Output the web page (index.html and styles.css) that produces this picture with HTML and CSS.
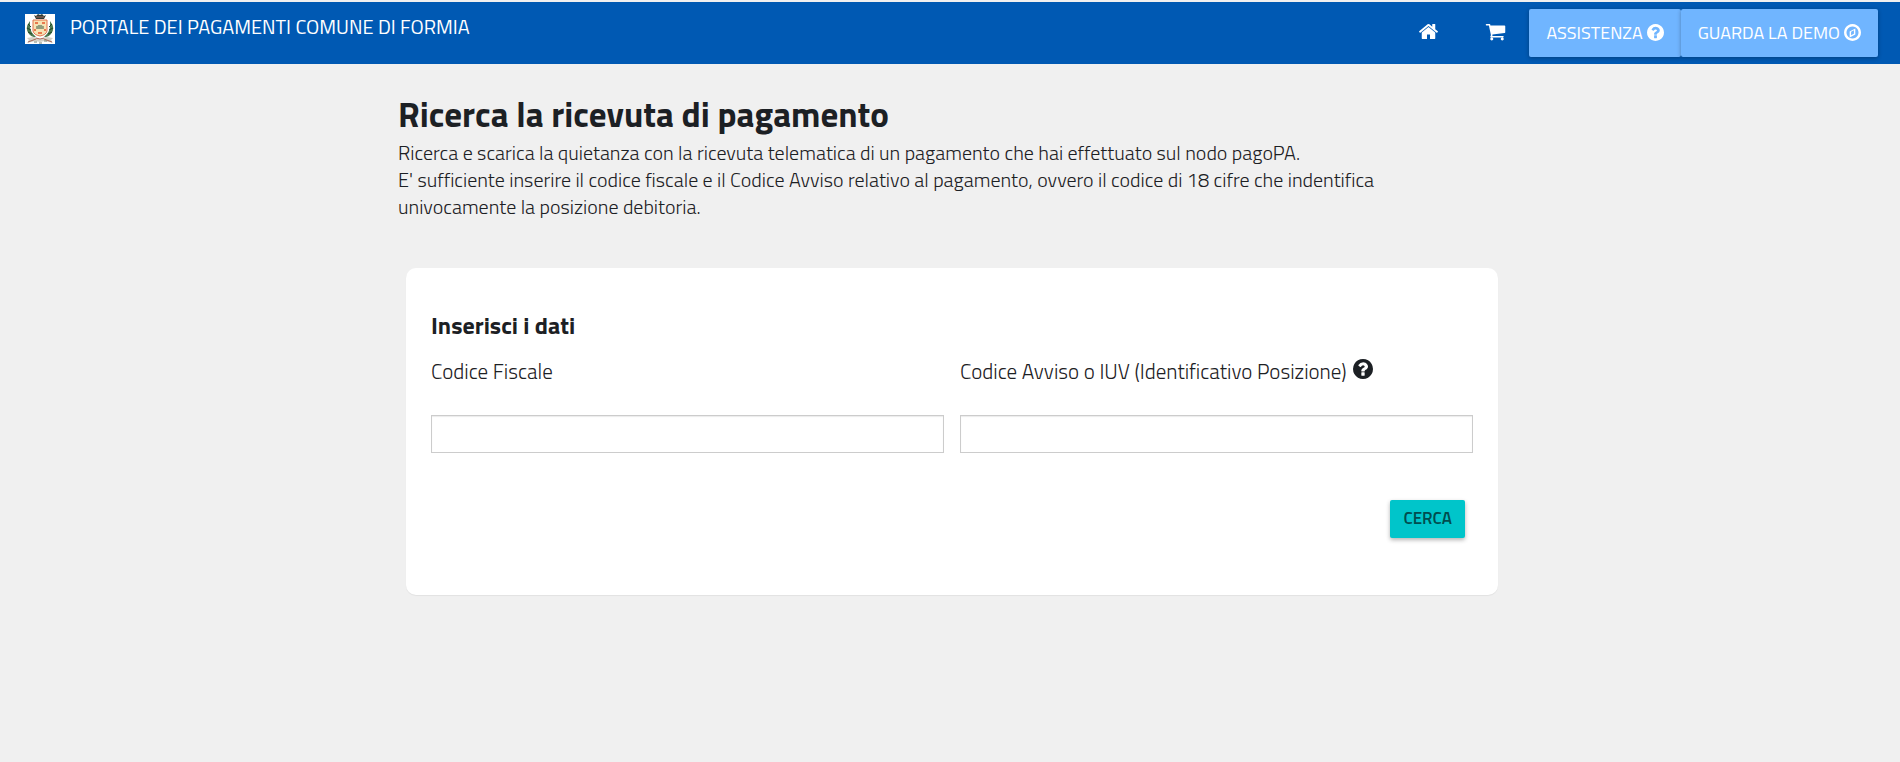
FILE: index.html
```html
<!DOCTYPE html>
<html lang="it">
<head>
    <meta charset="UTF-8">
    <meta name="viewport" content="width=device-width, initial-scale=1.0">
    <title>Portale dei pagamenti Comune di Formia</title>
    <link rel="stylesheet" href="styles.css">
</head>
<body>

<header class="topbar">
    <a class="brand" href="#">
        <svg class="crest" viewBox="0 0 30 30" aria-hidden="true">
            <rect width="30" height="30" fill="#fff"/>
            <!-- laurel branches -->
            <path d="M5 7Q-1 14 4 20Q7 24 11 23Q5 18 5 12Z" fill="#4d7a50"/>
            <path d="M25 7Q31 14 26 20Q23 24 19 23Q25 18 25 12Z" fill="#4d7a50"/>
            <path d="M3 10l3 3M2 14l4 2M3 18l4 2M27 10l-3 3M28 14l-4 2M27 18l-4 2" stroke="#1f4527"/>
            <!-- crown -->
            <path d="M9 1l2 1 2-2 2 1 2-1 2 2 2-1-2 4H11Z" fill="#2e3b35"/>
            <path d="M11 3h8" stroke="#a5695c"/>
            <!-- shield -->
            <path d="M8 6h14v11q-1 4-7 5q-6-1-7-5Z" fill="#f6e2b4" stroke="#e2734f"/>
            <path d="M10 8h3v2h-3zM17 8h3v2h-3zM9 15h2v2H9zM19 15h2v2h-2zM13 18h4v2h-4z" fill="#e8794f"/>
            <path d="M12 11h6v4h-6z" fill="#d5dfb4"/>
            <path d="M12 15v-3M14 15v-4M16 15v-4M18 15v-3" stroke="#4e5a45"/>
            <!-- ribbon -->
            <path d="M2 24l6-1 7 2 7-2 6 1-2 2 2 3-8-2-5 1-5-1-8 2 2-3Z" fill="#d3cfc4"/>
            <path d="M3 28l8-3M27 28l-8-3M11 24l4 1 4-1" stroke="#a8695a" fill="none"/>
            <path d="M9 28h3M14 29h3M19 27h3" stroke="#7b8471"/>
        </svg>
        <span class="brand-name">PORTALE DEI PAGAMENTI COMUNE DI FORMIA</span>
    </a>
    <nav class="menu">
        <a class="icon-link" href="#" aria-label="Home">
            <svg class="nav-icon" viewBox="0 0 1792 1792"><path d="M1472 992v480q0 26-19 45t-45 19h-384v-384h-256v384h-384q-26 0-45-19t-19-45v-480q0-1 .5-3t.5-3l575-474 575 474q1 2 1 6zm223-69l-62 74q-8 9-21 11h-3q-13 0-21-7l-692-577-692 577q-12 8-24 7-13-2-21-11l-62-74q-8-10-7-23.5t11-21.5l719-599q32-26 76-26t76 26l244 204v-195q0-14 9-23t23-9h192q14 0 23 9t9 23v408l219 182q10 8 11 21.5t-7 23.5z"/></svg>
        </a>
        <a class="icon-link" href="#" aria-label="Carrello">
            <svg class="nav-icon" viewBox="0 0 1792 1792"><path d="M704 1536q0 52-38 90t-90 38-90-38-38-90 38-90 90-38 90 38 38 90zm896 0q0 52-38 90t-90 38-90-38-38-90 38-90 90-38 90 38 38 90zm128-1088v512q0 24-16.5 42.5t-40.5 21.5l-1044 122q13 60 13 70 0 16-24 64h920q26 0 45 19t19 45-19 45-45 19h-1024q-26 0-45-19t-19-45q0-11 8-31.5t16-36 21.5-40 15.5-29.5l-177-823h-204q-26 0-45-19t-19-45 19-45 45-19h256q16 0 28.5 6.5t19.5 15.5 13 24.5 8 26 5.5 29.5 4.5 26h1201q26 0 45 19t19 45z"/></svg>
        </a>
        <button class="menu-btn" type="button">
            ASSISTENZA
            <svg class="btn-icon" viewBox="128 128 1536 1536" aria-hidden="true"><path d="M1024 1376v-192q0-14-9-23t-23-9h-192q-14 0-23 9t-9 23v192q0 14 9 23t23 9h192q14 0 23-9t9-23zm256-672q0-88-55.5-163t-138.5-116-170-41q-243 0-371 213-15 24 8 42l132 100q7 6 19 6 16 0 25-12 53-68 86-92 34-24 86-24 48 0 85.5 26t37.5 59q0 38-20 61t-68 45q-63 28-115.5 86.5t-52.5 125.5v36q0 14 9 23t23 9h192q14 0 23-9t9-23q0-19 21.5-49.5t54.5-49.5q32-18 49-28.5t46-35 44.5-48 28-60.5 12.5-81zm384 192q0 209-103 385.5t-279.5 279.5-385.5 103-385.5-103-279.5-279.5-103-385.5 103-385.5 279.5-279.5 385.5-103 385.5 103 279.5 279.5 103 385.5z"/></svg>
        </button>
        <button class="menu-btn" type="button">
            GUARDA LA DEMO
            <svg class="btn-icon" viewBox="128 128 1536 1536" aria-hidden="true"><path d="M768 1138l256-128v-311l-256 128v311zm384-594v542l-512 256v-542zm288 352q0-148-73-273t-198-198-273-73-273 73-198 198-73 273 73 273 198 198 273 73 273-73 198-198 73-273zm224 0q0 209-103 385.5t-279.5 279.5-385.5 103-385.5-103-279.5-279.5-103-385.5 103-385.5 279.5-279.5 385.5-103 385.5 103 279.5 279.5 103 385.5z"/></svg>
        </button>
    </nav>
</header>

<main class="content">
    <h1>Ricerca la ricevuta di pagamento</h1>
    <p class="intro">
        Ricerca e scarica la quietanza con la ricevuta telematica di un pagamento che hai effettuato sul nodo pagoPA.<br>
        E' sufficiente inserire il codice fiscale e il Codice Avviso relativo al pagamento, ovvero il codice di 18 cifre che indentifica univocamente la posizione debitoria.
    </p>

    <form class="card">
        <h2>Inserisci i dati</h2>
        <div class="fields">
            <div class="field">
                <label for="codice-fiscale">Codice Fiscale</label>
                <input type="text" id="codice-fiscale">
            </div>
            <div class="field">
                <label for="codice-avviso">
                    Codice Avviso o IUV (Identificativo Posizione)
                    <svg class="help-icon" viewBox="128 128 1536 1536" aria-hidden="true"><path d="M1024 1376v-192q0-14-9-23t-23-9h-192q-14 0-23 9t-9 23v192q0 14 9 23t23 9h192q14 0 23-9t9-23zm256-672q0-88-55.5-163t-138.5-116-170-41q-243 0-371 213-15 24 8 42l132 100q7 6 19 6 16 0 25-12 53-68 86-92 34-24 86-24 48 0 85.5 26t37.5 59q0 38-20 61t-68 45q-63 28-115.5 86.5t-52.5 125.5v36q0 14 9 23t23 9h192q14 0 23-9t9-23q0-19 21.5-49.5t54.5-49.5q32-18 49-28.5t46-35 44.5-48 28-60.5 12.5-81zm384 192q0 209-103 385.5t-279.5 279.5-385.5 103-385.5-103-279.5-279.5-103-385.5 103-385.5 279.5-279.5 385.5-103 385.5 103 279.5 279.5 103 385.5z"/></svg>
                </label>
                <input type="text" id="codice-avviso">
            </div>
        </div>
        <div class="actions">
            <button class="search-btn" type="button">CERCA</button>
        </div>
    </form>
</main>

</body>
</html>
```

FILE: styles.css
```css
* {
    box-sizing: border-box;
}

body {
    margin: 0;
    background: #f0f0f0;
    color: #1c2024;
    font-family: "Titillium Web", Roboto, sans-serif;
    font-size: 20px;
    font-weight: 300;
}

.topbar {
    display: flex;
    justify-content: space-between;
    align-items: flex-start;
    margin-top: 2px;
    padding: 7px 22px 7px 25px;
    background: #0059b3;
    color: #fff;
}

.brand {
    display: flex;
    align-items: center;
    gap: 15px;
    padding-top: 5px;
    color: #fff;
    text-decoration: none;
}

.crest {
    width: 30px;
    height: 30px;
}

.brand-name {
    font-size: 20px;
    font-weight: 400;
    line-height: 26px;
    padding-bottom: 4px;
}

.menu {
    display: flex;
    align-items: center;
}

.icon-link {
    display: flex;
    padding: 0 23px 4px;
    color: #fff;
}

.nav-icon {
    width: 21px;
    height: 21px;
    fill: currentColor;
}

.menu-btn {
    display: flex;
    align-items: center;
    gap: 4px;
    height: 48px;
    padding: 0 17px 2px;
    border: none;
    border-radius: 2px;
    background: #70b5ff;
    color: #fff;
    font-family: inherit;
    font-size: 18px;
    box-shadow: 0 1px 4px rgba(0, 0, 0, 0.3);
    cursor: pointer;
}

.btn-icon {
    width: 17px;
    height: 17px;
    fill: currentColor;
}

.content {
    box-sizing: content-box;
    max-width: 1108px;
    margin: 0 auto;
    padding: 26px 20px 32px 24px;
}

h1 {
    margin: 0;
    font-size: 35px;
    font-weight: 700;
    line-height: 48px;
}

.intro {
    max-width: 1020px;
    margin: 1px 8px 0 0;
    line-height: 27px;
}

.card {
    margin: 48px 8px 0;
    padding: 40px 25px 57px;
    background: #fff;
    border-radius: 10px;
    box-shadow: 0 1px 1px rgba(0, 0, 0, 0.06);
}

h2 {
    margin: 0;
    font-size: 24px;
    font-weight: 700;
    line-height: 34px;
}

.fields {
    display: grid;
    grid-template-columns: 1fr 1fr;
    gap: 16px;
    margin-top: 14px;
}

.field label {
    display: flex;
    align-items: center;
    gap: 6px;
    height: 30px;
    margin-bottom: 29px;
    font-size: 21px;
}

.help-icon {
    width: 20px;
    height: 20px;
    margin-bottom: 4px;
    fill: currentColor;
}

.field input {
    display: block;
    width: 100%;
    height: 38px;
    padding: 4px 10px;
    border: 1px solid #ccc;
    font-family: inherit;
    font-size: 18px;
    box-shadow: inset 0 1px 1px rgba(0, 0, 0, 0.08);
}

.actions {
    display: flex;
    justify-content: flex-end;
    margin-top: 47px;
    padding-right: 8px;
}

.search-btn {
    height: 38px;
    padding: 0 13px 2px;
    border: none;
    border-radius: 2px;
    background: #00c5ca;
    color: #004d4f;
    font-family: inherit;
    font-size: 17px;
    font-weight: 600;
    box-shadow: 0 2px 4px rgba(0, 0, 0, 0.3);
    cursor: pointer;
}
```
